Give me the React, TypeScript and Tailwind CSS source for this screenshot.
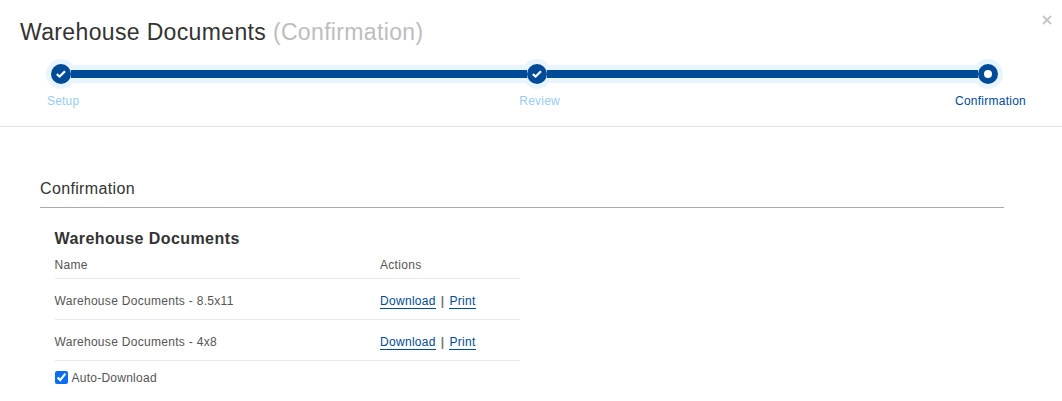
import React from 'react';

const CheckMark = () => (
  <svg width="12" height="10" viewBox="0 0 12 10" fill="none">
    <path d="M1.8 5.2 L4.6 7.6 L10 2.2" stroke="#fff" strokeWidth="2.2" strokeLinecap="butt" />
  </svg>
);

const StepDot = ({ done }: { done: boolean }) => (
  <div className="relative z-10 flex h-[30px] w-[30px] shrink-0 items-center justify-center">
    <div className="absolute inset-0 -z-10 rounded-full bg-[#e9f5fd]" />
    <div className="flex h-5 w-5 items-center justify-center rounded-full bg-[#004b97]">
      {done ? <CheckMark /> : <div className="h-2 w-2 rounded-full bg-white" />}
    </div>
  </div>
);

const StepBar = ({ className }: { className: string }) => (
  <div className={`z-20 -mx-[5px] flex h-[18px] items-center bg-[#e9f5fd] ${className}`}>
    <div className="h-2 w-full bg-[#004b97]" />
  </div>
);

const docs = ['Warehouse Documents - 8.5x11', 'Warehouse Documents - 4x8'];

export default function App() {
  return (
    <div className="relative h-[401px] w-[1062px] overflow-hidden bg-white font-['Liberation_Sans',Arial,sans-serif] text-[#333]">
      <button className="absolute right-[10px] top-[15px] text-[#c4c4c4]">
        <svg width="10" height="10" viewBox="0 0 10 10" fill="none">
          <path d="M1 1 L9 9 M9 1 L1 9" stroke="currentColor" strokeWidth="1.8" />
        </svg>
      </button>

      <div className="h-[127px] border-b border-[#e3e3e3] pt-[18px]">
        <h1 className="pl-5 text-[23px] font-normal leading-[28px] tracking-[0.35px]">
          Warehouse Documents <span className="text-[#bdbdbd]">(Confirmation)</span>
        </h1>
        <div className="ml-[46px] mt-[13px] flex w-[957px] items-center">
          <StepDot done />
          <StepBar className="w-[456px] shrink-0" />
          <StepDot done />
          <StepBar className="flex-1" />
          <StepDot done={false} />
        </div>
        <div className="ml-[47px] mt-[4px] flex w-[979px] text-[12px] leading-[16px] tracking-[0.2px]">
          <span className="text-[#97cdf0]">Setup</span>
          <span className="ml-[440px] text-[#97cdf0]">Review</span>
          <span className="ml-auto tracking-[0.25px] text-[#004b97]">Confirmation</span>
        </div>
      </div>

      <div className="w-[1004px] pl-10 pt-[52px]">
        <h2 className="border-b border-[#aaaaaa] pb-[9px] text-[16px] font-normal leading-[19px] tracking-[0.35px]">
          Confirmation
        </h2>
        <div className="pl-[14.5px] pt-[22px]">
          <h3 className="text-[16px] font-bold leading-[18px] tracking-[0.42px]">Warehouse Documents</h3>
          <table className="mt-[1px] w-[465.5px] border-collapse text-[12px] tracking-[0.3px] text-[#555]">
            <thead>
              <tr className="h-[29px] border-b border-[#eaeaea] text-left">
                <th className="w-[325.5px] p-0 pt-[3px] font-normal">Name</th>
                <th className="p-0 pt-[3px] font-normal">Actions</th>
              </tr>
            </thead>
            <tbody>
              {docs.map((name) => (
                <tr key={name} className="h-[41px] border-b border-[#eaeaea]">
                  <td className="p-0 pt-[4px]">{name}</td>
                  <td className="p-0 pt-[4px]">
                    <a href="#" className="border-b border-[#004b97] text-[#004b97]">Download</a>
                    <span className="mx-[5px] font-bold text-[#777]">|</span>
                    <a href="#" className="border-b border-[#004b97] text-[#004b97]">Print</a>
                  </td>
                </tr>
              ))}
            </tbody>
          </table>
          <label className="mt-[9px] flex items-center text-[12px] leading-[16px] tracking-[0.25px] text-[#555]">
            <input type="checkbox" defaultChecked className="m-0 mr-[4px] h-[13px] w-[13px] accent-[#0b6cf0]" />
            Auto-Download
          </label>
        </div>
      </div>
    </div>
  );
}
